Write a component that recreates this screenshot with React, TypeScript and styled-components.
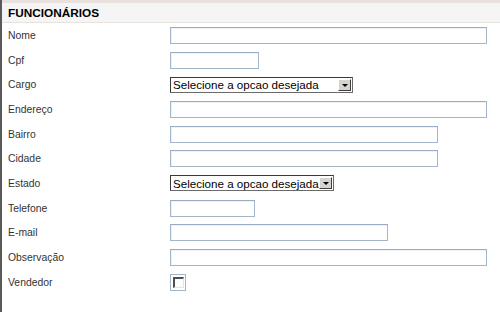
import { Fragment } from "react";
import styled, { createGlobalStyle } from "styled-components";

const GlobalStyle = createGlobalStyle`
  html, body {
    margin: 0;
    padding: 0;
    background: #ffffff;
  }
`;

const Panel = styled.div`
  height: 312px;
  box-sizing: border-box;
  border-left: 2px solid #5a5a5a;
  font-family: "Liberation Sans", Arial, sans-serif;
  background: #ffffff;
`;

const Header = styled.div`
  height: 23px;
  box-sizing: border-box;
  border-top: 3px solid #e9e1dd;
  border-bottom: 1px solid #e6e2de;
  background: #f5f5f5;
  padding-left: 6px;
  display: flex;
  align-items: center;
`;

const Title = styled.h2`
  margin: 0;
  font-size: 11.8px;
  font-weight: bold;
  color: #000000;
`;

const Form = styled.div`
  display: grid;
  grid-template-columns: 162px 1fr;
  grid-auto-rows: 24.7px;
  padding: 0 0 0 6px;
  align-items: center;
`;

const Label = styled.label`
  font-size: 10.4px;
  color: #333333;
`;

const Field = styled.input<{ $w: number }>`
  display: block;
  width: ${(p) => p.$w}px;
  height: 17px;
  box-sizing: border-box;
  border: 1px solid #a3b6c9;
  border-top-color: #98adc2;
  box-shadow: inset 1px 1px 0 #eef2f6;
  padding: 0 2px;
  margin: 0;
  outline: none;
  background: #ffffff;
`;

const Select = styled.div<{ $w: number }>`
  width: ${(p) => p.$w}px;
  height: 16px;
  box-sizing: border-box;
  border: 1px solid #3a3a3a;
  border-right-color: #6a6a6a;
  border-bottom-color: #6a6a6a;
  background: #ffffff;
  display: flex;
  align-items: center;
  justify-content: space-between;
  padding-left: 2px;
`;

const SelectText = styled.span`
  font-size: 11.6px;
  color: #000000;
  white-space: nowrap;
`;

const DropButton = styled.span`
  width: 13px;
  height: 12px;
  margin-right: 1px;
  box-sizing: border-box;
  background: #d6d3ce;
  border: 1px solid #ffffff;
  border-right-color: #404040;
  border-bottom-color: #404040;
  display: flex;
  align-items: center;
  justify-content: center;
`;

const Arrow = styled.span`
  width: 0;
  height: 0;
  border-left: 3px solid transparent;
  border-right: 3px solid transparent;
  border-top: 3px solid #000000;
  margin-top: 1px;
`;

const CheckOuter = styled.span`
  width: 16px;
  height: 17px;
  box-sizing: border-box;
  border: 1px solid #a3b6c9;
  display: flex;
  align-items: center;
  justify-content: center;
`;

const CheckInner = styled.span`
  width: 11px;
  height: 11px;
  box-sizing: border-box;
  border: 1px solid #e4e4e4;
  border-top: 2px solid #505050;
  border-left: 2px solid #505050;
  background: #fdfdfd;
`;

type Row =
  | { label: string; kind: "input"; width: number }
  | { label: string; kind: "select"; width: number }
  | { label: string; kind: "check" };

const rows: Row[] = [
  { label: "Nome", kind: "input", width: 317 },
  { label: "Cpf", kind: "input", width: 89 },
  { label: "Cargo", kind: "select", width: 183 },
  { label: "Endereço", kind: "input", width: 317 },
  { label: "Bairro", kind: "input", width: 268 },
  { label: "Cidade", kind: "input", width: 268 },
  { label: "Estado", kind: "select", width: 164 },
  { label: "Telefone", kind: "input", width: 85 },
  { label: "E-mail", kind: "input", width: 218 },
  { label: "Observação", kind: "input", width: 317 },
  { label: "Vendedor", kind: "check" },
];

export default function App() {
  return (
    <>
      <GlobalStyle />
      <Panel>
        <Header>
          <Title>FUNCIONÁRIOS</Title>
        </Header>
        <Form>
          {rows.map((row) => (
            <Fragment key={row.label}>
              <Label>{row.label}</Label>
              <div>
                {row.kind === "input" && <Field $w={row.width} />}
                {row.kind === "select" && (
                  <Select $w={row.width}>
                    <SelectText>Selecione a opcao desejada</SelectText>
                    <DropButton>
                      <Arrow />
                    </DropButton>
                  </Select>
                )}
                {row.kind === "check" && (
                  <CheckOuter>
                    <CheckInner />
                  </CheckOuter>
                )}
              </div>
            </Fragment>
          ))}
        </Form>
      </Panel>
    </>
  );
}
